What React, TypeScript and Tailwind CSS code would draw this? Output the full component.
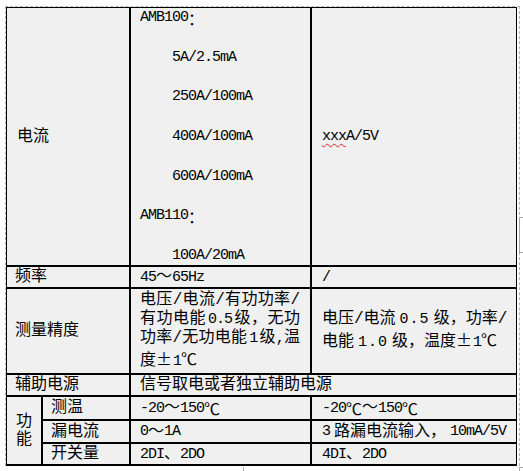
import type { ReactNode } from "react";

function L({ children, className = "" }: { children: ReactNode; className?: string }) {
  return <span className={"text-[15px] tracking-[-1px] " + className}>{children}</span>;
}

function C({ children }: { children: ReactNode }) {
  return <span className="font-['Noto_Sans_CJK_SC',sans-serif]">{children}</span>;
}

const cell = "bg-[#f0f0f0] flex items-center whitespace-nowrap";
const just = "whitespace-nowrap text-justify [text-align-last:justify]";

export default function App() {
  return (
    <div className="relative min-h-screen bg-white pt-[6px] pl-[5px]">
      <div className="w-[515px] border-t border-l border-r border-dashed border-[#b4b4b4] pr-[2px]">
        <div className="grid grid-cols-[34px_86px_179px_204px] grid-rows-[257px_20px_84px_20px_22px_21px_20px] gap-[2px] bg-black pt-[1px] pl-[1px] pr-[1px] pb-[2px] font-['Liberation_Mono','Noto_Sans_CJK_SC',monospace] text-[16px] leading-none text-black">
          {/* 电流 */}
          <div className={cell + " col-span-2 pl-[10px]"}>电流</div>
          <div className="bg-[#f0f0f0] flex flex-col justify-between pl-[9px] whitespace-nowrap">
            <div className="h-[19.8px] flex items-center"><L>AMB100</L><C>：</C></div>
            <div className="h-[19.8px] flex items-center pl-[32px]"><L>5A/2.5mA</L></div>
            <div className="h-[19.8px] flex items-center pl-[32px]"><L>250A/100mA</L></div>
            <div className="h-[19.8px] flex items-center pl-[32px]"><L>400A/100mA</L></div>
            <div className="h-[19.8px] flex items-center pl-[32px]"><L>600A/100mA</L></div>
            <div className="h-[19.8px] flex items-center"><L>AMB110</L><C>：</C></div>
            <div className="h-[19.8px] flex items-center pl-[32px]"><L>100A/20mA</L></div>
          </div>
          <div className={cell + " pl-[10px]"}>
            <L>
              <span className="underline decoration-wavy decoration-[#e02020] decoration-1 underline-offset-[3px]">xxx</span>A/5V
            </L>
          </div>

          {/* 频率 */}
          <div className={cell + " col-span-2 pl-[8px]"}>频率</div>
          <div className={cell + " pl-[9px]"}><L>45</L>～<L>65Hz</L></div>
          <div className={cell + " pl-[10px]"}><L>/</L></div>

          {/* 测量精度 */}
          <div className={cell + " col-span-2 pl-[8px]"}>测量精度</div>
          <div className="bg-[#f0f0f0] flex flex-col justify-center pl-[9px] pr-[10px] leading-[18.5px]">
            <div className={just}>电压/电流/有功功率/</div>
            <div className={just}>有功电能<L className="mx-[2px]">0.5</L>级，无功</div>
            <div className={just}>功率/无功电能<L className="mx-[2px]">1</L>级<L>,</L>温</div>
            <div className="whitespace-nowrap">度<C>±</C><L className="ml-[1px]">1</L><C>℃</C></div>
          </div>
          <div className="bg-[#f0f0f0] flex flex-col justify-center pl-[10px] leading-[19.5px] whitespace-nowrap">
            <div>电压/电流<L className="mx-[4px] tracking-[1px]">0.5</L>级，功率/</div>
            <div>电能<L className="mx-[4px] tracking-[1px]">1.0</L>级，温度<C>±</C><L className="ml-[1px]">1</L><C>℃</C></div>
          </div>

          {/* 辅助电源 */}
          <div className={cell + " col-span-2 pl-[8px]"}>辅助电源</div>
          <div className={cell + " col-span-2 pl-[9px]"}>信号取电或者独立辅助电源</div>

          {/* 功能 */}
          <div className="row-span-3 bg-[#f0f0f0] flex flex-col justify-center pl-[9px] leading-[18px]">
            <div>功</div>
            <div>能</div>
          </div>
          <div className={cell + " pl-[8px]"}>测温</div>
          <div className={cell + " pl-[9px]"}><L>-20</L>～<L>150</L><C>℃</C></div>
          <div className={cell + " pl-[10px]"}><L>-20</L><C>℃</C>～<L>150</L><C>℃</C></div>

          <div className={cell + " pl-[8px]"}>漏电流</div>
          <div className={cell + " pl-[9px]"}><L>0</L>～<L>1A</L></div>
          <div className={cell + " pl-[10px]"}>
            <L className="mr-[4px]">3</L>路漏电流输入，<L className="ml-[4px]">10mA/5V</L>
          </div>

          <div className={cell + " pl-[8px]"}>开关量</div>
          <div className={cell + " pl-[9px]"}><L>2DI</L>、<L>2DO</L></div>
          <div className={cell + " pl-[10px]"}><L>4DI</L>、<L>2DO</L></div>
        </div>
      </div>

      {/* table handles */}
      <div className="absolute left-[519px] top-[217px] h-[36px] w-[4px] border-l border-t border-b border-[#a8a8a8]" />
      <div className="absolute left-[243px] top-[467px] h-[4px] w-px bg-[#a8a8a8]" />
      <div className="absolute left-[519px] top-[467px] h-[4px] w-[4px] border-l border-t border-[#a8a8a8]" />
    </div>
  );
}
